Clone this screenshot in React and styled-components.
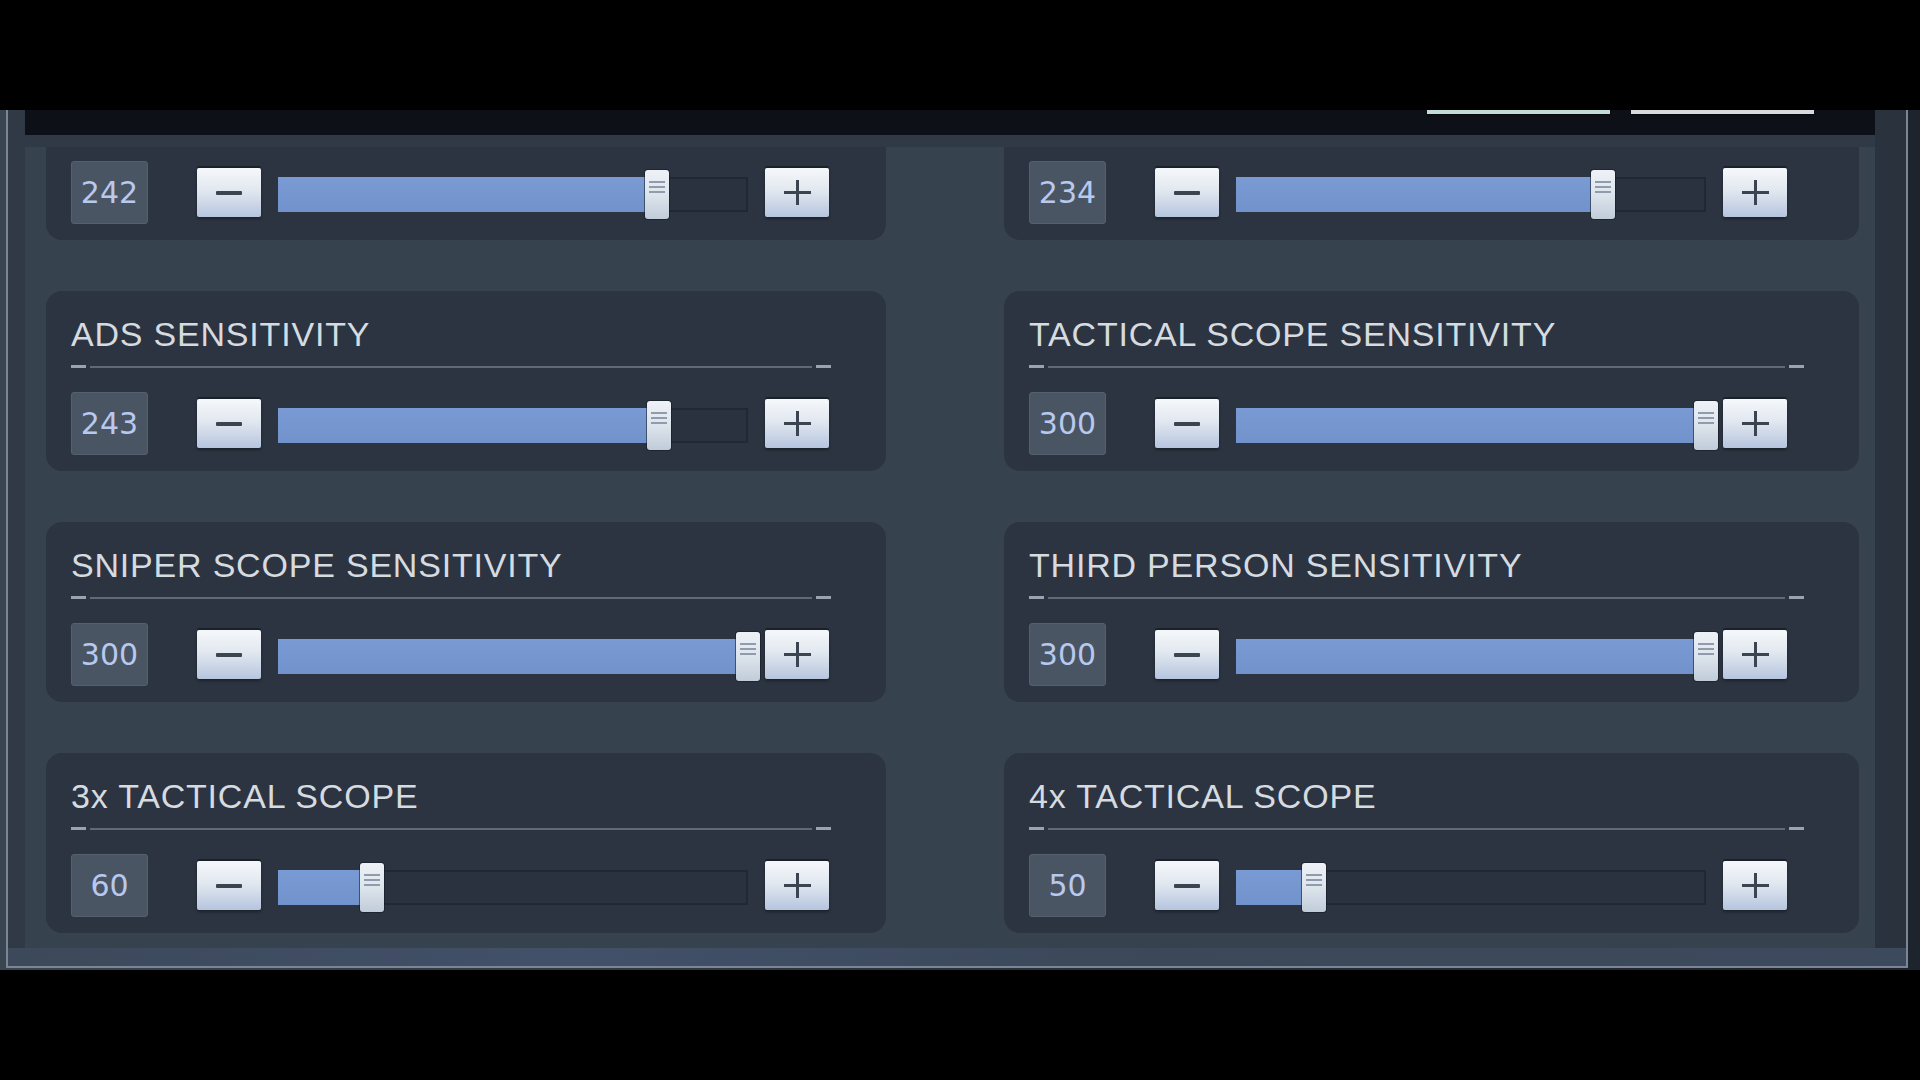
import React, { useState } from 'react';
import styled, { createGlobalStyle } from 'styled-components';

const MAX = 300;

const GlobalStyle = createGlobalStyle`
  html, body {
    margin: 0;
    padding: 0;
    background: #000;
  }
  body {
    width: 1920px;
    height: 1080px;
    overflow: hidden;
    font-family: "Liberation Sans", Arial, sans-serif;
  }
`;

// letterbox: black above and below the game panel
const Stage = styled.div`
  height: 1080px;
  padding-top: 110px;
  box-sizing: border-box;
  background: #000;
`;

const Backdrop = styled.div`
  height: 860px;
  background: linear-gradient(90deg, #3a4552 0%, #2a333e 50%, #1d242d 100%);
`;

const Frame = styled.div`
  margin-left: 6px;
  width: 1902px;
  height: 858px;
  box-sizing: border-box;
  border: 2px solid #7a8694;
  border-top: none;
  background: #303a46;
  display: flex;
  flex-direction: column;
`;

const Body = styled.div`
  flex: 1;
  display: flex;
  min-height: 0;
`;

const Content = styled.div`
  flex: 1;
  padding-left: 17px;
  display: flex;
  flex-direction: column;
  min-width: 0;
`;

const Header = styled.div`
  height: 25px;
  flex: none;
  background: #0d1117;
  display: flex;
  justify-content: flex-end;
  align-items: flex-start;
  gap: 21px;
  padding-right: 61px;
  margin-bottom: 12px;
`;

const TabEdge = styled.div`
  width: 183px;
  height: 4px;
  background: ${(p) => p.$color};
  box-shadow: 0 1px 2px rgba(0, 0, 0, 0.6);
`;

const Viewport = styled.div`
  flex: 1;
  background: #37424f;
  overflow: hidden;
`;

// list is scrolled: first row sits partly above the viewport
const Grid = styled.div`
  margin-top: -87px;
  padding-left: 21px;
  display: grid;
  grid-template-columns: 840px 855px;
  grid-auto-rows: 180px;
  column-gap: 118px;
  row-gap: 51px;
`;

const ScrollTrack = styled.div`
  width: 31px;
  flex: none;
  background: #29323d;
`;

const BottomBand = styled.div`
  height: 18px;
  flex: none;
  background: linear-gradient(90deg, #3c495a, #425069 30%, #3b4859 60%, #3d4a5d);
`;

const Card = styled.div`
  background: #2b3440;
  border-radius: 16px;
  padding: 24px 55px 16px 25px;
  box-sizing: border-box;
  display: flex;
  flex-direction: column;
`;

const Title = styled.h3`
  margin: 0;
  height: 38px;
  font-family: "Liberation Sans", Arial, sans-serif;
  font-weight: 400;
  font-size: 34px;
  line-height: 38px;
  letter-spacing: 0.8px;
  color: #d6dbe0;
  white-space: nowrap;
`;

const Divider = styled.div`
  margin-top: 12px;
  height: 3px;
  display: flex;
  align-items: center;
`;

const Dash = styled.span`
  width: 15px;
  height: 3px;
  background: #9aa4ae;
`;

const Rule = styled.span`
  flex: 1;
  height: 2px;
  margin: 0 4px;
  background: #5f6a77;
`;

const Controls = styled.div`
  margin-top: 24px;
  height: 63px;
  display: flex;
  align-items: center;
`;

const ValueBox = styled.div`
  width: 77px;
  height: 63px;
  box-sizing: border-box;
  margin-right: 49px;
  background: #4a5563;
  border: 1px solid #55606e;
  border-radius: 3px;
  display: flex;
  align-items: center;
  justify-content: center;
  font-family: "DejaVu Sans", sans-serif;
  font-size: 30px;
  color: #b8c8ee;
`;

const StepButton = styled.button`
  width: 64px;
  height: 49px;
  flex: none;
  padding: 0;
  border: none;
  border-radius: 2px;
  background: linear-gradient(180deg, #f5f8fb 0%, #e2e8f0 45%, #b6c5de 100%);
  box-shadow: 0 -2px 0 #1b2129, 0 2px 3px rgba(0, 0, 0, 0.35);
  display: flex;
  align-items: center;
  justify-content: center;
  cursor: pointer;
`;

const Track = styled.div`
  position: relative;
  width: 470px;
  height: 35px;
  flex: none;
  margin: 4px 17px 0;
  background: #29323e;
  box-shadow: inset 0 0 0 2px #212832;
`;

const Fill = styled.div`
  position: absolute;
  left: 0;
  top: 0;
  bottom: 0;
  background: linear-gradient(180deg, #7a9ad3, #7292cc);
`;

const Thumb = styled.div`
  position: absolute;
  top: -7px;
  width: 24px;
  height: 49px;
  box-sizing: border-box;
  border-radius: 3px;
  background: linear-gradient(180deg, #eef2f7 0%, #dde4ec 50%, #c1ccd9 100%);
  box-shadow: 0 0 0 1px rgba(20, 26, 34, 0.55);
`;

const Grip = styled.div`
  position: absolute;
  top: 11px;
  left: 4px;
  right: 4px;
  display: flex;
  flex-direction: column;
  gap: 3px;

  span {
    height: 2px;
    background: #909cab;
  }
`;

const MinusIcon = () => (
  <svg width="26" height="4" viewBox="0 0 26 4">
    <rect width="26" height="4" rx="1" fill="#3b4450" />
  </svg>
);

const PlusIcon = () => (
  <svg width="27" height="25" viewBox="0 0 27 25">
    <rect x="0" y="11" width="27" height="3" fill="#3b4450" />
    <rect x="12" y="0" width="3" height="25" fill="#3b4450" />
  </svg>
);

const Slider = ({ value }) => {
  const pct = (value / MAX) * 100;
  return (
    <Track>
      <Fill style={{ width: `${pct}%` }} />
      <Thumb style={{ left: `calc(${pct}% - 12px)` }}>
        <Grip>
          <span />
          <span />
          <span />
        </Grip>
      </Thumb>
    </Track>
  );
};

const SettingCard = ({ title, value, onChange }) => (
  <Card>
    <Title>{title}</Title>
    <Divider>
      <Dash />
      <Rule />
      <Dash />
    </Divider>
    <Controls>
      <ValueBox>{value}</ValueBox>
      <StepButton onClick={() => onChange(Math.max(0, value - 1))}>
        <MinusIcon />
      </StepButton>
      <Slider value={value} />
      <StepButton onClick={() => onChange(Math.min(MAX, value + 1))}>
        <PlusIcon />
      </StepButton>
    </Controls>
  </Card>
);

// first row is scrolled out of view, its titles are not shown
const initial = [
  { id: 'r1a', title: '', value: 242 },
  { id: 'r1b', title: '', value: 234 },
  { id: 'ads', title: 'ADS SENSITIVITY', value: 243 },
  { id: 'tac', title: 'TACTICAL SCOPE SENSITIVITY', value: 300 },
  { id: 'snp', title: 'SNIPER SCOPE SENSITIVITY', value: 300 },
  { id: 'tps', title: 'THIRD PERSON SENSITIVITY', value: 300 },
  { id: 'x3', title: '3x TACTICAL SCOPE', value: 60 },
  { id: 'x4', title: '4x TACTICAL SCOPE', value: 50 },
];

const App = () => {
  const [settings, setSettings] = useState(initial);

  const update = (id, value) => {
    setSettings((prev) => prev.map((s) => (s.id === id ? { ...s, value } : s)));
  };

  return (
    <>
      <GlobalStyle />
      <Stage>
        <Backdrop>
          <Frame>
            <Body>
              <Content>
                <Header>
                  <TabEdge $color="#c3dbd6" />
                  <TabEdge $color="#d6dadc" />
                </Header>
                <Viewport>
                  <Grid>
                    {settings.map((s) => (
                      <SettingCard
                        key={s.id}
                        title={s.title}
                        value={s.value}
                        onChange={(v) => update(s.id, v)}
                      />
                    ))}
                  </Grid>
                </Viewport>
              </Content>
              <ScrollTrack />
            </Body>
            <BottomBand />
          </Frame>
        </Backdrop>
      </Stage>
    </>
  );
};

export default App;
